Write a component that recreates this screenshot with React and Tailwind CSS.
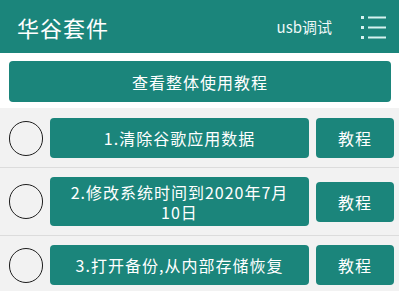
import React from "react";

const font = { fontFamily: '"Noto Sans CJK SC", "Noto Sans", sans-serif' };

const steps = [
  { id: 1, label: "1.清除谷歌应用数据" },
  { id: 2, label: "2.修改系统时间到2020年7月", second: "10日" },
  { id: 3, label: "3.打开备份,从内部存储恢复" },
];

const MenuIcon = () => (
  <svg width="26" height="24" viewBox="0 0 26 24" fill="none">
    <rect x="0" y="1" width="3" height="3" fill="#d6f2f0" />
    <rect x="0" y="11" width="3" height="3" fill="#d6f2f0" />
    <rect x="0" y="21" width="3" height="3" fill="#d6f2f0" />
    <rect x="7" y="1.5" width="18" height="2" fill="#d6f2f0" />
    <rect x="7" y="11.5" width="18" height="2" fill="#d6f2f0" />
    <rect x="7" y="21.5" width="18" height="2" fill="#d6f2f0" />
  </svg>
);

const Row = ({ step, first, last }) => (
  <div
    className={`flex items-center pl-[9px] ${first ? "pt-[10px] pb-[9px]" : "py-[9px]"} ${
      last ? "" : "border-b border-[#dcdcdc]"
    }`}
  >
    <div className="w-[34px] h-[35px] rounded-full border-[1.5px] border-[#1e1e1e] shrink-0" />
    <button
      className={`ml-[7px] w-[259px] ${
        step.second ? "h-[49px]" : "h-[40px]"
      } rounded-[4px] bg-[#1b857b] text-white text-[16px] font-normal tracking-[1px] leading-[20px] text-center`}
    >
      {step.label}
      {step.second && (
        <>
          <br />
          {step.second}
        </>
      )}
    </button>
    <button className="ml-[7px] w-[78px] h-[40px] rounded-[4px] bg-[#1b857b] text-white text-[16px] font-normal tracking-[1px]">
      教程
    </button>
  </div>
);

export default function App() {
  return (
    <div className="w-[399px] h-[291px] overflow-hidden bg-[#f2f2f2]" style={font}>
      <div className="h-[53px] bg-[#1b857b] flex items-center pl-[17px] pr-[12px]">
        <h1 className="text-white text-[22px] font-normal tracking-[1px] leading-none">华谷套件</h1>
        <span className="ml-auto text-[#eef8f7] text-[15px] leading-none">usb调试</span>
        <div className="ml-[29px] pt-[1px]">
          <MenuIcon />
        </div>
      </div>
      <div className="bg-white h-[55px] pt-[8px] pl-[9px] pr-[8px]">
        <button className="w-full h-[41px] rounded-[4px] bg-[#1b857b] text-white text-[16px] font-normal tracking-[1px]">
          查看整体使用教程
        </button>
      </div>
      {steps.map((s, i) => (
        <Row key={s.id} step={s} first={i === 0} last={i === steps.length - 1} />
      ))}
    </div>
  );
}
